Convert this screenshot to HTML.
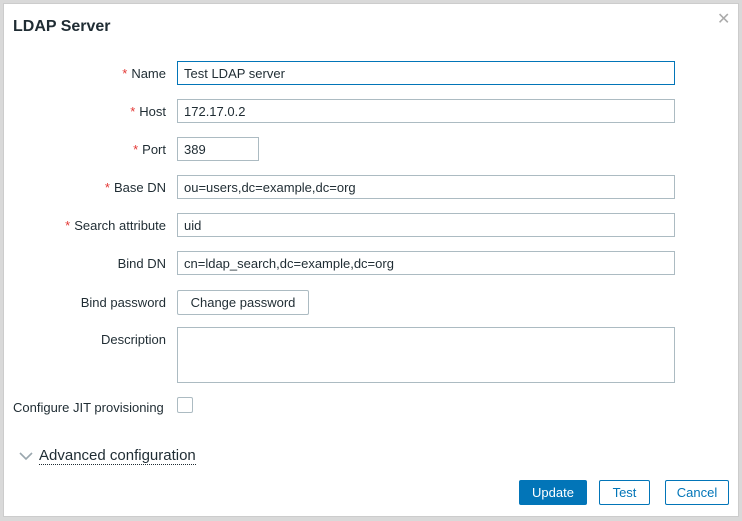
<!DOCTYPE html>
<html><head><style>
body{margin:0;width:742px;height:521px;background:#d9d9d9;font-family:"Liberation Sans",Arial,sans-serif;font-size:13px;color:#1f2c33;position:relative;overflow:hidden}
.dlg{position:absolute;left:3px;top:3px;width:736px;height:514px;background:#fff;border:1px solid #ccc;box-sizing:border-box}
.t{position:absolute;left:13px;top:18px;font-size:16px;font-weight:bold;color:#1f2c33}
.x{position:absolute;left:717px;top:9px;font-size:16px;color:#aaa}
.l{position:absolute;right:576px;text-align:right;white-space:nowrap}
.l b{color:#e33734;font-weight:normal;margin-right:4px}
.i{position:absolute;left:177px;width:498px;height:24px;border:1px solid #acbbc2;box-sizing:border-box;padding:4px 6px;line-height:15px}
.btn{position:absolute;height:25px;border:1px solid #0275b8;color:#0275b8;box-sizing:border-box;text-align:center;line-height:23px;background:#fff;border-radius:2px}
</style></head><body>
<div class="dlg"></div>
<div class="t">LDAP Server</div>
<div class="x">✕</div>
<div class="l" style="top:66px"><b>*</b>Name</div>
<div class="i" style="top:61px;border-color:#0275b8">Test LDAP server</div>
<div class="l" style="top:104px"><b>*</b>Host</div>
<div class="i" style="top:99px">172.17.0.2</div>
<div class="l" style="top:142px"><b>*</b>Port</div>
<div class="i" style="top:137px;width:82px">389</div>
<div class="l" style="top:180px"><b>*</b>Base DN</div>
<div class="i" style="top:175px">ou=users,dc=example,dc=org</div>
<div class="l" style="top:218px"><b>*</b>Search attribute</div>
<div class="i" style="top:213px">uid</div>
<div class="l" style="top:256px">Bind DN</div>
<div class="i" style="top:251px">cn=ldap_search,dc=example,dc=org</div>
<div class="l" style="top:295px">Bind password</div>
<div class="btn" style="left:177px;top:290px;width:132px;border-color:#acbbc2;color:#1f2c33">Change password</div>
<div class="l" style="top:332px">Description</div>
<div class="i" style="top:327px;height:56px"></div>
<div class="l" style="top:400px;right:auto;left:13px">Configure JIT provisioning</div>
<div style="position:absolute;left:177px;top:397px;width:16px;height:16px;border:1px solid #acbbc2;box-sizing:border-box;border-radius:2px"></div>
<svg style="position:absolute;left:18px;top:450px" width="16" height="12"><path d="M2 3l6 6 6-6" stroke="#9aa7ae" stroke-width="1.6" fill="none"/></svg>
<div style="position:absolute;left:39px;top:447px;font-size:15px;border-bottom:1px dotted #1f2c33;line-height:17px">Advanced configuration</div>
<div class="btn" style="left:519px;top:480px;width:68px;background:#0275b8;color:#fff">Update</div>
<div class="btn" style="left:599px;top:480px;width:51px">Test</div>
<div class="btn" style="left:665px;top:480px;width:64px">Cancel</div>
</body></html>
